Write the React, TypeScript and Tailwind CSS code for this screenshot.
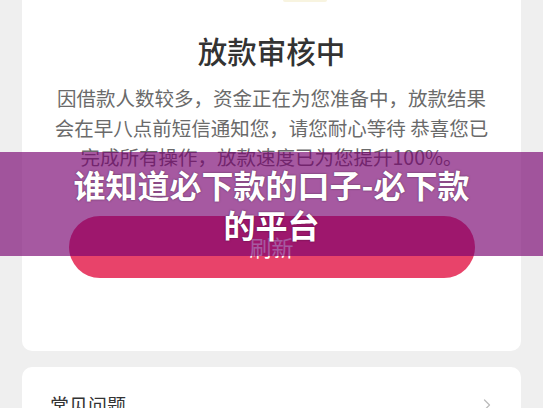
import { ChevronRight } from "lucide-react";

const font = { fontFamily: '"Noto Sans CJK SC", "Noto Sans", sans-serif' };

export default function App() {
  return (
    <div className="relative h-[408px] w-[543px] overflow-hidden bg-[#efefef]" style={font}>
      <div className="px-[22px]">
        {/* 审核卡片 */}
        <div className="-mt-3 rounded-[10px] bg-white pt-3 pb-[73px]">
          <div className="ml-[261px] h-[2px] w-[44px] rounded-b-full bg-[#f8f4e0]" />
          <h1 className="mt-[28px] text-center text-[29.5px] leading-[40px] font-medium text-[#333]">放款审核中</h1>
          <p className="mt-[13px] text-center text-[19.5px] leading-[29.5px] text-[#6a6a6a]">
            因借款人数较多，资金正在为您准备中，放款结果
            <br />
            会在早八点前短信通知您，请您耐心等待 恭喜您已
            <br />
            完成所有操作，放款速度已为您提升100%。
          </p>
          <div className="mt-[44px] flex justify-center">
            <button className="flex h-[62px] w-[406px] items-center justify-center rounded-full bg-[#e8436a] text-[22px] text-white">
              刷新
            </button>
          </div>
        </div>

        {/* 常见问题 */}
        <div className="mt-4 flex items-center justify-between rounded-[10px] bg-white pt-[24px] pr-[24px] pb-6 pl-[28px]">
          <span className="text-[19px] leading-[28px] text-[#333]">常见问题</span>
          <ChevronRight className="h-5 w-5 text-[#bbb]" strokeWidth={1.5} />
        </div>
      </div>

      {/* 标题浮层 */}
      <div className="absolute inset-x-0 top-[152px] flex h-[104px] flex-col items-center justify-center bg-[rgba(118,0,110,0.65)] text-center text-[32px] leading-[40px] font-bold text-white [text-shadow:0_0_2px_rgba(0,0,0,0.5)]">
        <div>谁知道必下款的口子-必下款</div>
        <div>的平台</div>
      </div>
    </div>
  );
}
